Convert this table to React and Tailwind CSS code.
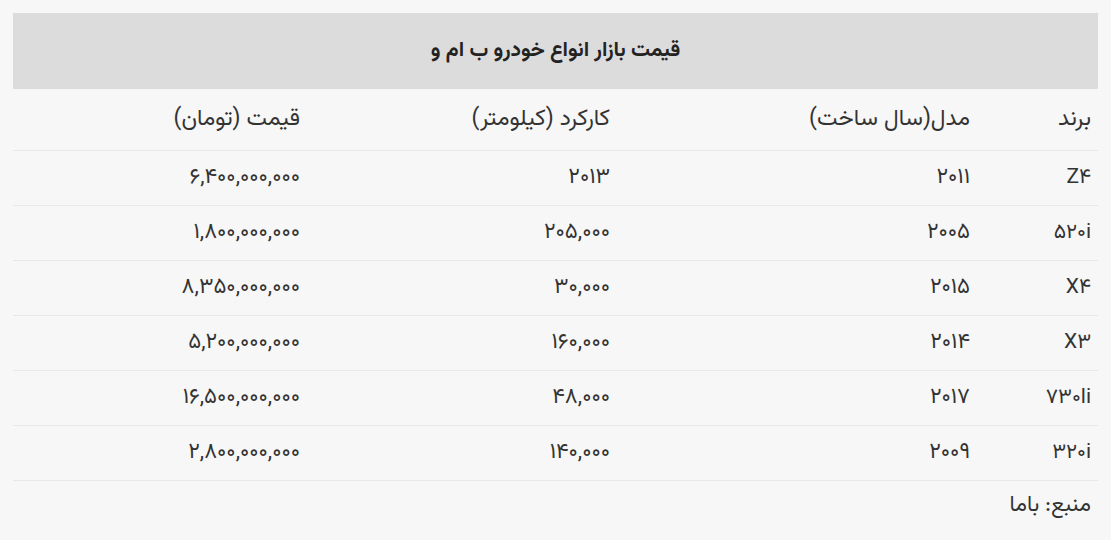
import React from "react";

const rows = [
  { brand: "Z۴", model: "۲۰۱۱", km: "۲۰۱۳", price: "۶,۴۰۰,۰۰۰,۰۰۰" },
  { brand: "۵۲۰i", model: "۲۰۰۵", km: "۲۰۵,۰۰۰", price: "۱,۸۰۰,۰۰۰,۰۰۰" },
  { brand: "X۴", model: "۲۰۱۵", km: "۳۰,۰۰۰", price: "۸,۳۵۰,۰۰۰,۰۰۰" },
  { brand: "X۳", model: "۲۰۱۴", km: "۱۶۰,۰۰۰", price: "۵,۲۰۰,۰۰۰,۰۰۰" },
  { brand: "۷۳۰li", model: "۲۰۱۷", km: "۴۸,۰۰۰", price: "۱۶,۵۰۰,۰۰۰,۰۰۰" },
  { brand: "۳۲۰i", model: "۲۰۰۹", km: "۱۴۰,۰۰۰", price: "۲,۸۰۰,۰۰۰,۰۰۰" },
];

const App = () => {
  return (
    <div
      dir="rtl"
      className="min-h-[540px] bg-[#f7f7f7] px-[13px] pt-[13px] text-[#333] font-['Vazirmatn','Noto_Sans_Arabic','DejaVu_Sans',sans-serif]"
    >
      <table className="w-full border-collapse text-[22px]">
        <thead>
          <tr>
            <th
              colSpan={4}
              className="h-[76px] bg-[#dcdcdc] text-center text-[21px] font-bold text-[#222]"
            >
              قیمت بازار انواع خودرو ب ام و
            </th>
          </tr>
          <tr className="h-[61px] border-b border-[#e8e8e8] text-[23px]">
            <th className="w-[120px] pr-[7px] text-right font-normal">برند</th>
            <th className="w-[360px] pr-[8px] text-right font-normal">مدل(سال ساخت)</th>
            <th className="w-[310px] pr-[8px] text-right font-normal">کارکرد (کیلومتر)</th>
            <th className="pr-[8px] text-right font-normal">قیمت (تومان)</th>
          </tr>
        </thead>
        <tbody>
          {rows.map((row, i) => (
            <tr key={i} className="h-[55px] border-b border-[#e8e8e8]">
              <td className="pr-[7px] text-[21px]">{row.brand}</td>
              <td className="pr-[8px] tracking-[1px]">{row.model}</td>
              <td className="pr-[8px] tracking-[1px]">{row.km}</td>
              <td className="pr-[8px] tracking-[1px]">{row.price}</td>
            </tr>
          ))}
        </tbody>
      </table>
      <p className="pr-[7px] pt-[8px] text-[22px]">منبع: باما</p>
    </div>
  );
};

export default App;
